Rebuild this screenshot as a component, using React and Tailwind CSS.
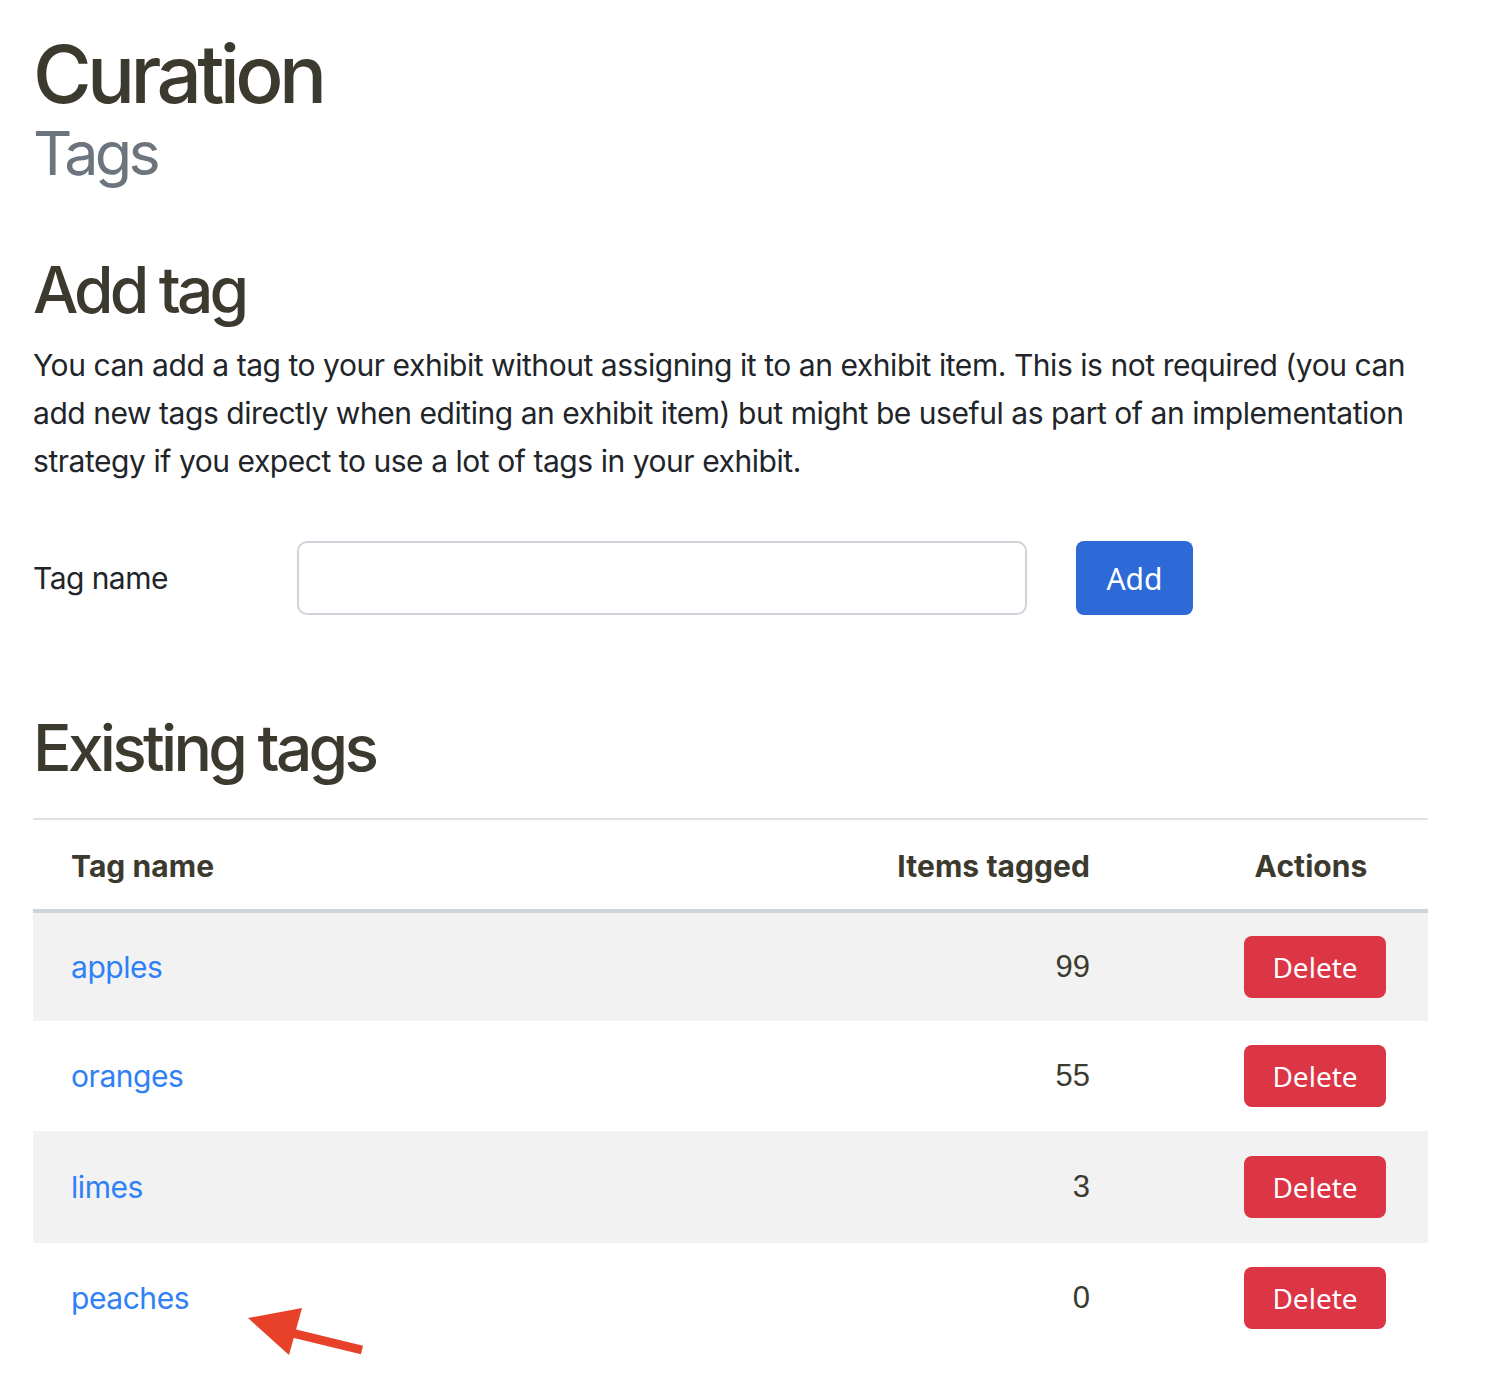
import React from "react";

const rows = [
  { name: "apples", count: 99, h: "h-[110px]" },
  { name: "oranges", count: 55, h: "h-[110px]" },
  { name: "limes", count: 3, h: "h-[112px]" },
  { name: "peaches", count: 0, h: "h-[110px]" },
];

export default function App() {
  return (
    <div className="relative min-h-[1394px] w-[1498px] bg-white font-['Inter',sans-serif] text-[#212529]">
      <div className="w-[1395px] ml-[33px] pt-[34px]">
        <h1 className="text-[80px] leading-[80px] font-medium tracking-[-0.058em] text-[#3c3a2f]">Curation</h1>
        <div className="mt-[9px] text-[61px] leading-[61px] tracking-[-0.06em] text-[#6c757d]">Tags</div>

        <h2 className="mt-[74px] text-[64px] leading-[64px] font-medium tracking-[-0.06em] text-[#3c3a2f]">Add tag</h2>
        <p className="mt-[19px] text-[30px] leading-[48px] tracking-[-0.015em] text-[#212529]">
          You can add a tag to your exhibit without assigning it to an exhibit item. This is not required (you can add new tags directly when editing an exhibit item) but might be useful as part of an implementation strategy if you expect to use a lot of tags in your exhibit.
        </p>

        <div className="mt-[56px] flex items-center h-[74px]">
          <label className="w-[264px] text-[30px] tracking-[-0.018em] text-[#212529]">Tag name</label>
          <input
            type="text"
            className="h-[74px] w-[730px] rounded-[10px] border-2 border-[#ced4da] bg-white px-4 text-[30px] outline-none"
          />
          <button className="ml-[49px] h-[74px] w-[117px] rounded-[8px] bg-[#2d6ad8] font-['Noto_Sans',sans-serif] text-[30px] text-white">
            Add
          </button>
        </div>

        <h2 className="mt-[101px] text-[64px] leading-[64px] font-medium tracking-[-0.058em] text-[#3c3a2f]">Existing tags</h2>

        <table className="mt-[38px] w-full border-collapse">
          <thead>
            <tr className="h-[92px] border-t-2 border-[#dee2e6] border-b-4 border-b-[#cfd4da]">
              <th className="pl-[38px] pt-[4px] text-left text-[30px] font-bold tracking-[0.002em] text-[#3c3a2f]">Tag name</th>
              <th className="w-[420px] pr-[38px] pt-[4px] text-right text-[30px] font-bold tracking-[0.002em] text-[#3c3a2f]">Items tagged</th>
              <th className="w-[300px] pl-[66px] pt-[4px] text-center text-[30px] font-bold tracking-[0.002em] text-[#3c3a2f]">Actions</th>
            </tr>
          </thead>
          <tbody>
            {rows.map((r, i) => (
              <tr key={r.name} className={`${r.h} ${i % 2 === 0 ? "bg-[#f2f2f2]" : "bg-white"}`}>
                <td className="pl-[38px] text-[30px] tracking-[-0.015em]">
                  <a href="#" className="text-[#3080f6]">{r.name}</a>
                </td>
                <td className="pr-[38px] text-right font-['Liberation_Sans',Arial,sans-serif] text-[31px] text-[#3c3a2f]">{r.count}</td>
                <td className="pl-[116px]">
                  <button className="h-[62px] w-[142px] rounded-[8px] bg-[#dc3545] font-['Noto_Sans',sans-serif] text-[28px] text-white">
                    Delete
                  </button>
                </td>
              </tr>
            ))}
          </tbody>
        </table>
      </div>

      <svg className="absolute left-[240px] top-[1300px]" width="130" height="60" viewBox="0 0 130 60">
        <line x1="52" y1="33" x2="122" y2="50" stroke="#e8412a" strokeWidth="9" />
        <polygon points="8,18 62,8 49,55" fill="#e8412a" />
      </svg>
    </div>
  );
}
